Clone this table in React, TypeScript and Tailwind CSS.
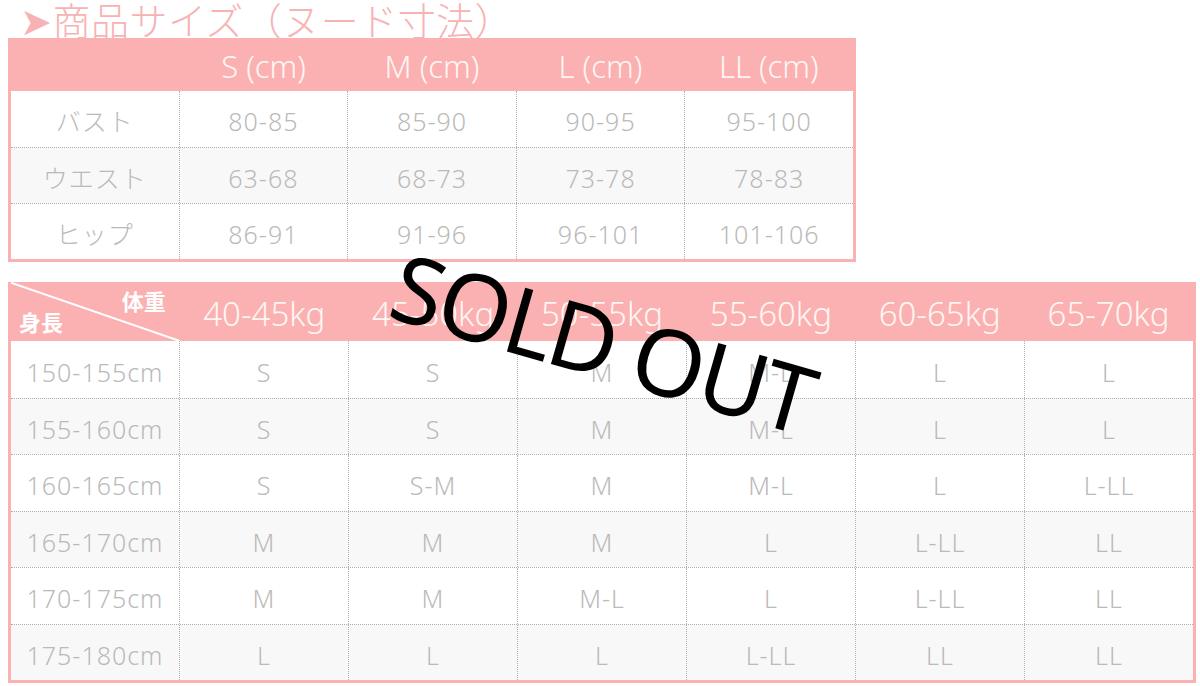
const topHead = ["S (cm)", "M (cm)", "L (cm)", "LL (cm)"];
const topRows = [
  ["バスト", "80-85", "85-90", "90-95", "95-100"],
  ["ウエスト", "63-68", "68-73", "73-78", "78-83"],
  ["ヒップ", "86-91", "91-96", "96-101", "101-106"],
];

const weightHead = ["40-45kg", "45-50kg", "50-55kg", "55-60kg", "60-65kg", "65-70kg"];
const heightRows = [
  ["150-155cm", "S", "S", "M", "M-L", "L", "L"],
  ["155-160cm", "S", "S", "M", "M-L", "L", "L"],
  ["160-165cm", "S", "S-M", "M", "M-L", "L", "L-LL"],
  ["165-170cm", "M", "M", "M", "L", "L-LL", "LL"],
  ["170-175cm", "M", "M", "M-L", "L", "L-LL", "LL"],
  ["175-180cm", "L", "L", "L", "L-LL", "LL", "LL"],
];

const BodyRow = ({ cells, idx, heights }: { cells: string[]; idx: number; heights: string }) => (
  <div className={`flex ${heights} ${idx % 2 === 1 ? "bg-[#f8f8f8]" : "bg-white"} ${idx > 0 ? "border-t border-dotted border-[#b0b0b0]" : ""}`}>
    {cells.map((c, i) => (
      <div
        key={i}
        className={`flex-1 flex items-center justify-center pt-[6px] text-[25px] tracking-[1px] text-[#bababa] ${i > 0 ? "border-l border-dotted border-[#b0b0b0]" : ""}`}
      >
        {c}
      </div>
    ))}
  </div>
);

const App = () => {
  return (
    <div className="relative w-[1200px] h-[686px] bg-white overflow-hidden font-['Noto_Sans','Noto_Sans_CJK_JP',sans-serif] font-light">
      <div className="h-[38px] overflow-hidden pl-[20px] text-[38px] leading-[40px] tracking-[0.5px] text-[#f7b3b3] whitespace-nowrap">
        ➤商品サイズ（ヌード寸法）
      </div>

      {/* body measurements */}
      <section className="ml-[8px] w-[848px] border-[3px] border-t-0 border-[#fbb1b1]">
        <header className="flex h-[53px] -mx-[3px] px-[3px] bg-[#fbb1b1] text-[#fff6f3] text-[31px]">
          <div className="flex-1" />
          {topHead.map((h) => (
            <div key={h} className="flex-1 flex items-center justify-center pt-[4px]">{h}</div>
          ))}
        </header>
        {topRows.map((r, i) => (
          <BodyRow key={i} cells={r} idx={i} heights="h-[56px]" />
        ))}
      </section>

      {/* height / weight chart */}
      <section className="mt-[20px] ml-[8px] w-[1188px] border-[3px] border-t-0 border-[#fbb1b1]">
        <header className="flex h-[59px] -mx-[3px] px-[3px] bg-[#fbb1b1] text-[#fff6f3] text-[33px]">
          <div className="relative flex-1 text-[22px] font-bold text-white font-['Noto_Sans_CJK_JP',sans-serif]">
            <svg className="absolute inset-0 w-full h-full" viewBox="0 0 169 59" preserveAspectRatio="none">
              <line x1="-2" y1="0" x2="169" y2="59" stroke="white" strokeWidth="2" />
            </svg>
            <span className="absolute right-[14px] top-[2px]">体重</span>
            <span className="absolute left-[8px] bottom-[3px]">身長</span>
          </div>
          {weightHead.map((h) => (
            <div key={h} className="flex-1 flex items-center justify-center pt-[4px]">{h}</div>
          ))}
        </header>
        {heightRows.map((r, i) => (
          <BodyRow key={i} cells={r} idx={i} heights="h-[56.5px]" />
        ))}
      </section>

      {/* sold out stamp */}
      <div className="absolute left-[603px] top-[342px] -translate-x-1/2 -translate-y-1/2 rotate-[16deg] font-['Noto_Sans',sans-serif] font-normal text-[93px] leading-none text-black whitespace-nowrap tracking-[-3px]">
        SOLD OUT
      </div>
    </div>
  );
};

export default App;
